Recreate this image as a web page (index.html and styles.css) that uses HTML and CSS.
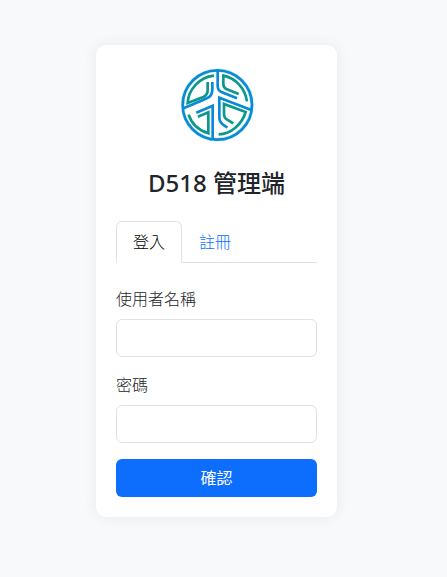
FILE: index.html
```html
<!DOCTYPE html>
<html lang="zh-Hant">
<head>
<meta charset="utf-8">
<meta name="viewport" content="width=device-width, initial-scale=1">
<title>D518 管理端</title>
<link rel="stylesheet" href="styles.css">
</head>
<body>
<main class="page">
  <section class="card">
    <svg class="logo" viewBox="3 3 240 240" aria-hidden="true">
      <circle class="logo-halo" cx="124" cy="123" r="104"/>
      <g class="logo-blue">
        <circle cx="124" cy="123" r="104"/>
        <path d="M109 54V78Q109 95 94 102Q84 107 22 133"/>
        <path d="M125 20V66Q125 79 136 84L183 103"/>
        <path d="M61 146L110 125V226"/>
        <path d="M226 138L130 101V160Q130 174 141 182L154 191"/>
      </g>
      <g class="logo-green">
        <path d="M114 35C70 40 37 76 35 117L82 99Q95 93 95 78V54"/>
        <path d="M188 90L151 75Q142 71 142 61V35C180 43 207 73 213 112"/>
        <path d="M66 158L97 145V208C68 199 46 178 38 152"/>
        <path d="M172 178L152 166Q144 161 144 150V120L209 144C198 181 165 210 128 211"/>
      </g>
    </svg>
    <h1 class="title">D518 管理端</h1>
    <nav class="tabs">
      <a class="tab tab-active" href="#login" aria-current="page">登入</a>
      <a class="tab" href="#register">註冊</a>
    </nav>
    <form class="form" id="login">
      <div class="field">
        <label for="username">使用者名稱</label>
        <input id="username" type="text">
      </div>
      <div class="field">
        <label for="password">密碼</label>
        <input id="password" type="password">
      </div>
      <button class="submit" type="submit">確認</button>
    </form>
  </section>
</main>
</body>
</html>
```
FILE: styles.css
```css
* {
  box-sizing: border-box;
}

body {
  margin: 0;
  background: #f8f9fa;
  color: #212529;
  font: 300 16px/24px "Noto Sans", "Noto Sans CJK TC", sans-serif;
}

.page {
  display: flex;
  justify-content: center;
  align-items: center;
  min-height: 100vh;
  padding: 40px 110px 55px 96px;
}

.card {
  flex: 1;
  max-width: 400px;
  padding: 20px;
  border-radius: 10px;
  background: #fff;
  box-shadow: 0 0 15px rgba(0, 0, 0, 0.07);
}

.logo {
  display: block;
  width: 80px;
  height: 80px;
  margin: 0 auto 24px;
  fill: none;
}

.logo-halo {
  stroke: #d8f3f8;
  stroke-width: 13;
}

.logo-blue {
  stroke: #0a8ad6;
  stroke-width: 8;
}

.logo-green {
  stroke: #0a988c;
  stroke-width: 8;
}

.title {
  margin: 0 0 24px;
  font-size: 24px;
  font-weight: 500;
  line-height: 28px;
  text-align: center;
}

.tabs {
  display: flex;
  border-bottom: 1px solid #dee2e6;
}

.tab {
  margin-bottom: -1px;
  padding: 8px 16px;
  border: 1px solid transparent;
  border-radius: 6px 6px 0 0;
  color: #0d6efd;
  text-decoration: none;
}

.tab-active {
  border-color: #dee2e6 #dee2e6 #fff;
  background: #fff;
  color: #000;
}

.form {
  display: grid;
  gap: 16px;
  margin-top: 24px;
}

.field {
  display: grid;
  gap: 8px;
}

.field input {
  width: 100%;
  height: 38px;
  padding: 6px 12px;
  border: 1px solid #dee2e6;
  border-radius: 6px;
  background: #fff;
  color: inherit;
  font: inherit;
}

.submit {
  height: 38px;
  padding: 6px 12px;
  border: 0;
  border-radius: 6px;
  background: #0d6efd;
  color: #fff;
  font: inherit;
  font-weight: 400;
}
```
